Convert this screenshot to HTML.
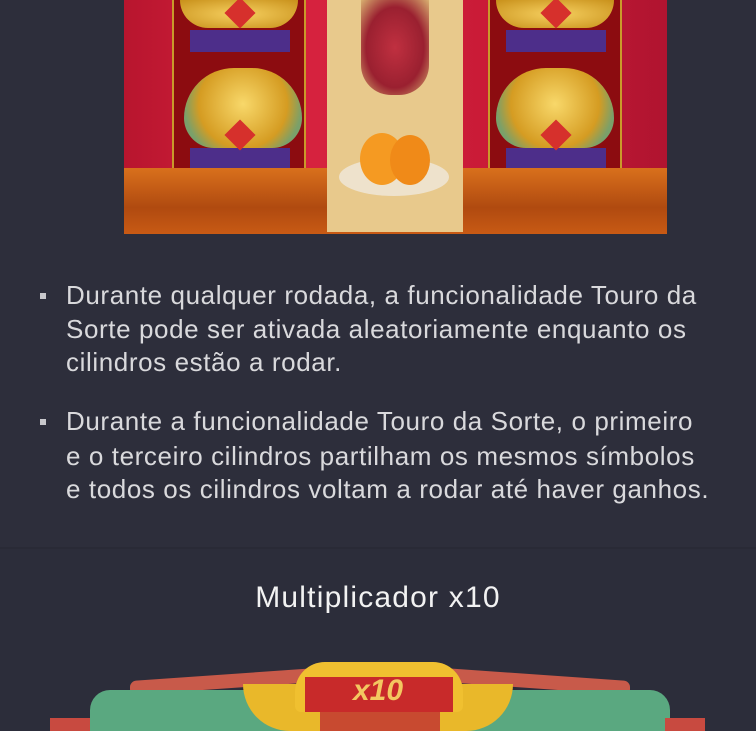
<!DOCTYPE html>
<html><head><meta charset="utf-8"><style>
*{margin:0;padding:0;box-sizing:border-box}
body{width:756px;height:731px;overflow:hidden;background:#2d2e3b;font-family:"Liberation Sans",sans-serif;position:relative}
.abs{position:absolute}
.line{position:absolute;left:66px;color:#d9d9dc;font-size:26px;white-space:nowrap;letter-spacing:0.6px}
.bul{position:absolute;left:40px;width:6px;height:6px;background:#c8c8cc}
</style></head><body>
<div class="abs" style="left:124px;top:0;width:543px;height:234px;background:linear-gradient(90deg,#b8152e,#d8233f 30%,#c81a36 70%,#b01430);overflow:hidden">
  <div class="abs" style="left:48px;top:0;width:134px;height:172px;background:#8c0c10;border:2px solid #c99a2a;border-top:none"></div>
  <div class="abs" style="left:364px;top:0;width:134px;height:172px;background:#8c0c10;border:2px solid #c99a2a;border-top:none"></div>
  <div class="abs" style="left:56px;top:0;width:118px;height:28px;border-radius:0 0 40px 40px;background:radial-gradient(#f6d060,#c8901a)"></div>
  <div class="abs" style="left:66px;top:30px;width:100px;height:22px;background:#4d2e8a"></div>
  <div class="abs" style="left:60px;top:68px;width:118px;height:80px;border-radius:50px 50px 30px 30px;background:radial-gradient(circle at 50% 45%,#f8d86a,#d59c22 60%,#7aa06a 80%)"></div>
  <div class="abs" style="left:66px;top:148px;width:100px;height:22px;background:#4d2e8a"></div>
  <div class="abs" style="left:372px;top:0;width:118px;height:28px;border-radius:0 0 40px 40px;background:radial-gradient(#f6d060,#c8901a)"></div>
  <div class="abs" style="left:382px;top:30px;width:100px;height:22px;background:#4d2e8a"></div>
  <div class="abs" style="left:372px;top:68px;width:118px;height:80px;border-radius:50px 50px 30px 30px;background:radial-gradient(circle at 50% 45%,#f8d86a,#d59c22 60%,#7aa06a 80%)"></div>
  <div class="abs" style="left:382px;top:148px;width:100px;height:22px;background:#4d2e8a"></div>
  <div class="abs" style="left:105px;top:2px;width:22px;height:22px;background:#d6302c;transform:rotate(45deg)"></div>
  <div class="abs" style="left:105px;top:124px;width:22px;height:22px;background:#d6302c;transform:rotate(45deg)"></div>
  <div class="abs" style="left:421px;top:2px;width:22px;height:22px;background:#d6302c;transform:rotate(45deg)"></div>
  <div class="abs" style="left:421px;top:124px;width:22px;height:22px;background:#d6302c;transform:rotate(45deg)"></div>
  <div class="abs" style="left:0;top:168px;width:543px;height:66px;background:linear-gradient(#d9701c,#b04a10 60%,#c85a14)"></div>
  <div class="abs" style="left:203px;top:0;width:136px;height:232px;background:#e8c98c"></div>
  <div class="abs" style="left:237px;top:0;width:68px;height:95px;border-radius:0 0 30px 30px;background:radial-gradient(#c03040,#9a2030 60%,#d8b070)"></div>
  <div class="abs" style="left:215px;top:158px;width:110px;height:38px;border-radius:50%;background:#eee2cc"></div>
  <div class="abs" style="left:236px;top:133px;width:44px;height:52px;border-radius:50%;background:#f59a22"></div>
  <div class="abs" style="left:266px;top:135px;width:40px;height:50px;border-radius:50%;background:#f08a18"></div>
</div>
<div class="bul" style="top:293px"></div>
<div class="line" style="top:280px">Durante qualquer rodada, a funcionalidade Touro da</div>
<div class="line" style="top:314px">Sorte pode ser ativada aleatoriamente enquanto os</div>
<div class="line" style="top:347px">cilindros estão a rodar.</div>
<div class="bul" style="top:419px"></div>
<div class="line" style="top:406px">Durante a funcionalidade Touro da Sorte, o primeiro</div>
<div class="line" style="top:441px">e o terceiro cilindros partilham os mesmos símbolos</div>
<div class="line" style="top:474px">e todos os cilindros voltam a rodar até haver ganhos.</div>
<div class="abs" style="left:0;top:547px;width:756px;height:2px;background:#292a36"></div>
<div class="abs" style="left:0;top:549px;width:756px;height:182px;background:#2c2d3a"></div>
<div class="abs" style="left:0;top:581px;width:756px;text-align:center;color:#f2f2f2;font-size:30px;letter-spacing:1.2px">Multiplicador x10</div>
<div class="abs" style="left:130px;top:672px;width:260px;height:14px;background:#c85a4a;transform:skewY(-4deg);border-radius:6px"></div>
<div class="abs" style="left:370px;top:672px;width:260px;height:14px;background:#c85a4a;transform:skewY(4deg);border-radius:6px"></div>
<div class="abs" style="left:90px;top:690px;width:580px;height:41px;background:#5aa880;border-radius:20px 20px 0 0"></div>
<div class="abs" style="left:50px;top:718px;width:40px;height:13px;background:#c84a40"></div>
<div class="abs" style="left:665px;top:718px;width:40px;height:13px;background:#c84a40"></div>
<div class="abs" style="left:243px;top:684px;width:110px;height:47px;border-radius:0 0 0 60px;background:#e9b82a"></div>
<div class="abs" style="left:403px;top:684px;width:110px;height:47px;border-radius:0 0 60px 0;background:#e9b82a"></div>
<div class="abs" style="left:295px;top:662px;width:168px;height:50px;border-radius:30px 30px 6px 6px;background:#f0c030"></div>
<div class="abs" style="left:305px;top:677px;width:148px;height:35px;background:#c82a2a"></div>
<div class="abs" style="left:340px;top:674px;width:76px;height:40px;color:#f3c860;font-weight:bold;font-size:30px;text-align:center;font-style:italic">x10</div>
<div class="abs" style="left:320px;top:712px;width:120px;height:19px;background:#c84a30"></div>
</body></html>
